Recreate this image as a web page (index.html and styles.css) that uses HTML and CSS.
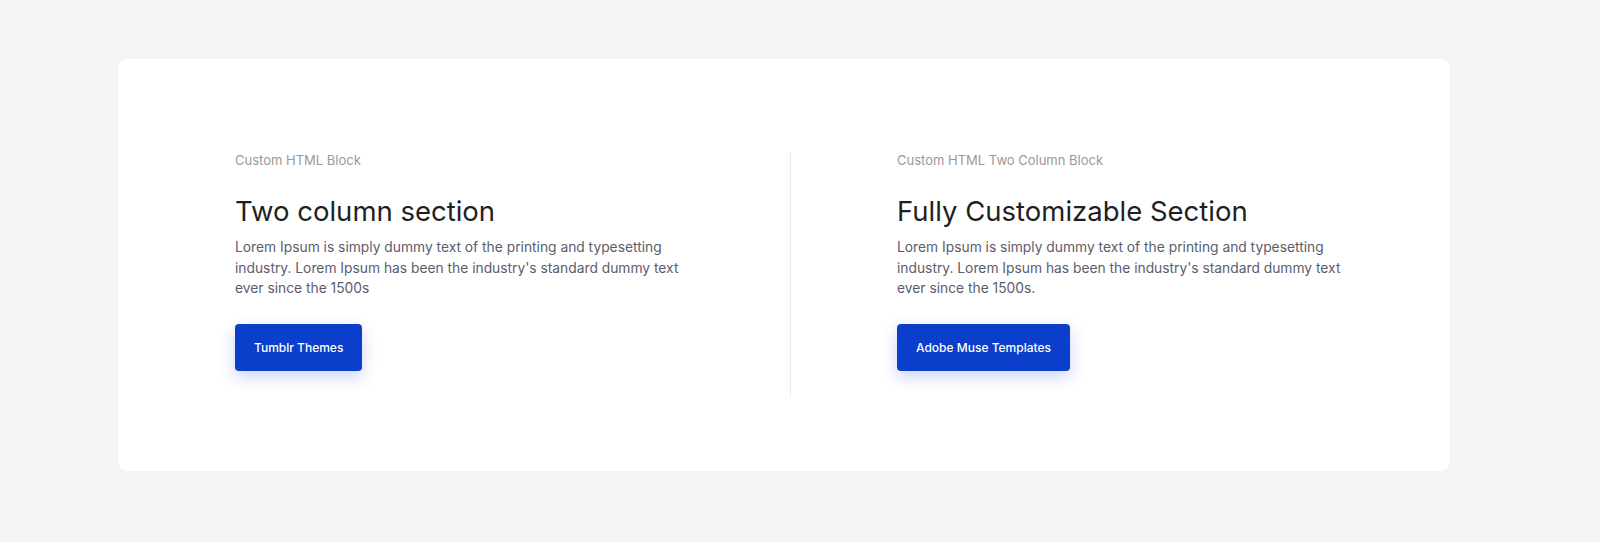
FILE: index.html
```html
<!DOCTYPE html>
<html lang="en">
<head>
<meta charset="utf-8">
<title>Two column section</title>
<link rel="stylesheet" href="styles.css">
</head>
<body>
<main class="page">
  <section class="card">
    <div class="col col-left">
      <p class="label">Custom HTML Block</p>
      <h2 class="title">Two column section</h2>
      <p class="text">Lorem Ipsum is simply dummy text of the printing and typesetting industry. Lorem Ipsum has been the industry's standard dummy text ever since the 1500s</p>
      <a class="btn" href="#">Tumblr Themes</a>
    </div>
    <div class="divider"></div>
    <div class="col col-right">
      <p class="label">Custom HTML Two Column Block</p>
      <h2 class="title">Fully Customizable Section</h2>
      <p class="text">Lorem Ipsum is simply dummy text of the printing and typesetting industry. Lorem Ipsum has been the industry's standard dummy text ever since the 1500s.</p>
      <a class="btn" href="#">Adobe Muse Templates</a>
    </div>
  </section>
</main>
</body>
</html>
```

FILE: styles.css
```css
* { box-sizing: border-box; }
html, body { margin: 0; padding: 0; }
body {
  background: #f3f4f6;
  font-family: "Inter", "Open Sans", sans-serif;
  width: 1600px;
  height: 542px;
  overflow: hidden;
}
.page {
  padding: 59px 150px 0 118px;
}
.card {
  width: 1332px;
  height: 412px;
  background: #ffffff;
  border-radius: 10px;
  padding: 93px 80px 0 117px;
  display: grid;
  grid-template-columns: 555px 1px 1fr;
  align-items: start;
}
.divider {
  background: #ececec;
  height: 246px;
}
.col-right { padding-left: 106px; }
.label {
  margin: 0;
  font-size: 13px;
  line-height: 16px;
  color: #999999;
}
.title {
  margin: 26px 0 0;
  font-size: 27.5px;
  line-height: 34px;
  font-weight: 400;
  color: #1f1f1f;
}
.text {
  margin: 9px 0 0;
  font-size: 13.8px;
  line-height: 20.5px;
  color: #5c5c6b;
  max-width: 458px;
}
.btn {
  display: inline-flex;
  align-items: center;
  justify-content: center;
  margin-top: 25px;
  height: 47px;
  padding: 0 19px;
  background: #0a3ecb;
  color: #ffffff;
  font-size: 12px;
  font-weight: 500;
  text-decoration: none;
  border-radius: 4px;
  box-shadow: 0 6px 16px rgba(10, 62, 203, 0.22);
}
```
